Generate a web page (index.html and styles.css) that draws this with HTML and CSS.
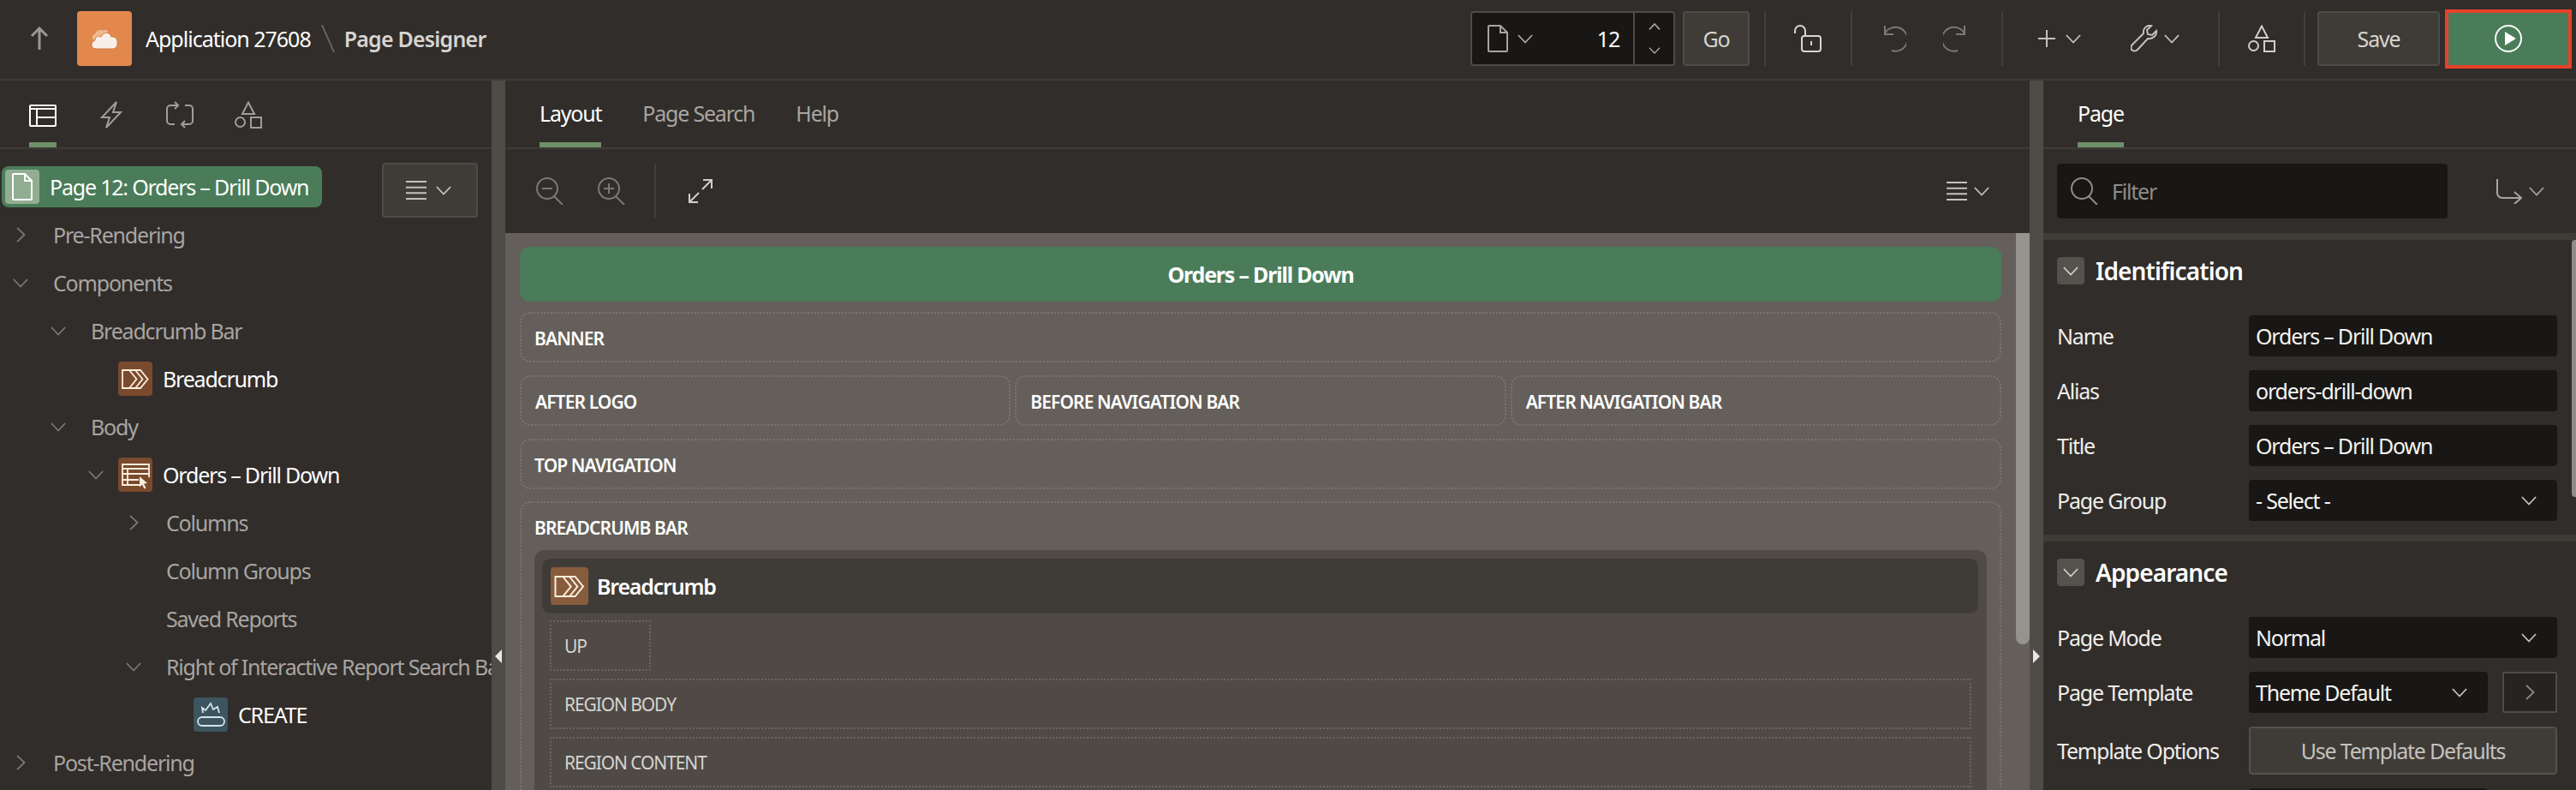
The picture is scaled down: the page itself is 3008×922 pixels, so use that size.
FILE: index.html
```html
<!DOCTYPE html>
<html lang="en">
<head>
  <meta charset="UTF-8" />
  <title>Page Designer</title>
  <link rel="stylesheet" href="styles.css">
</head>
<body>
  <svg class="defs" width="0" height="0">
    <symbol id="chev-d" viewBox="0 0 20 12"><path d="M1 1l9 9.500 9-9.500" fill="none" stroke="currentColor" stroke-width="2"/></symbol>
    <symbol id="chev-r" viewBox="0 0 12 20"><path d="M1 1l9.500 9-9.500 9" fill="none" stroke="currentColor" stroke-width="2"/></symbol>
    <symbol id="shapes" viewBox="0 0 32 32"><g fill="none" stroke="currentColor" stroke-width="2"><path d="M16 1.500l7 13.500H9z"/><circle cx="6.500" cy="24.500" r="5.500"/><rect x="19" y="19" width="12" height="12"/></g></symbol>
    <symbol id="lines" viewBox="0 0 24 22"><path d="M0 1h24M0 7.700h24M0 14.300h24M0 21h24" fill="none" stroke="currentColor" stroke-width="2"/></symbol>
    <symbol id="crumb" viewBox="0 0 40 40"><g fill="none" stroke="currentColor" stroke-width="1.800"><path d="M5 10h21l8.500 10.500L26 31H5z"/><path d="M13 10l8.500 10.500L13 31M20 10l8.500 10.500L20 31"/></g></symbol>
    <symbol id="zoom-o" viewBox="0 0 32 32"><g fill="none" stroke="currentColor" stroke-width="2"><circle cx="13" cy="13" r="12"/><path d="M21 22l10 10M7 13h12"/></g></symbol>
    <symbol id="zoom-i" viewBox="0 0 32 32"><g fill="none" stroke="currentColor" stroke-width="2"><circle cx="13" cy="13" r="12"/><path d="M21 22l10 10M7 13h12M13 7v12"/></g></symbol>
  </svg>

  <header class="topbar">
    <button class="up-btn">
      <svg width="20" height="28" viewBox="0 0 20 28"><path d="M10 27V2M1 11l9-9 9 9" fill="none" stroke="#9b9895" stroke-width="3"/></svg>
    </button>
    <div class="app-logo">
      <svg width="64" height="64" viewBox="0 0 64 64">
        <path d="M19 34c-3-2-2-7 2-8 1-4 6-6 9-4 3-2 6 0 7 3l-6 9z" fill="#f0b88f" stroke="#d9834d" stroke-width="1"/>
        <path d="M22 44c-6 0-7-8-1-10 0-4 4-6 7-4 2-6 11-6 12 0 4-1 8 3 7 8 0 4-3 6-6 6z" fill="#f8efe9" stroke="#cf7c47" stroke-width="1"/>
      </svg>
    </div>
    <a class="crumb-link">Application 27608</a>
    <span class="crumb-sep"></span>
    <strong class="crumb-current">Page Designer</strong>

    <div class="top-tools">
      <div class="page-picker">
        <svg class="ic-page" width="24" height="32" viewBox="0 0 24 32"><path d="M1 2a1 1 0 0 1 1-1h13l8 8v21a1 1 0 0 1-1 1H2a1 1 0 0 1-1-1zM15 1v8h8" fill="none" stroke="#a8a5a1" stroke-width="2"/></svg>
        <svg class="ic-chev" width="18" height="11" style="color:#a8a5a1"><use href="#chev-d"/></svg>
        <span class="page-num">12</span>
        <div class="spin">
          <svg width="14" height="8" viewBox="0 0 20 12" style="color:#a8a5a1"><path d="M1 11l9-9.500 9 9.500" fill="none" stroke="currentColor" stroke-width="2.500"/></svg>
          <svg width="14" height="8" viewBox="0 0 20 12" style="color:#a8a5a1"><use href="#chev-d"/></svg>
        </div>
      </div>
      <button class="btn btn-go">Go</button>
      <i class="vdiv d-a"></i>
      <svg class="ic-lock" width="32" height="32" viewBox="0 0 32 32"><g fill="none" stroke="#d8d6d3" stroke-width="2"><path d="M1 10V7a6 6 0 0 1 12 0v6"/><rect x="9" y="13" width="22" height="18" rx="3"/><path d="M20 19v5"/></g></svg>
      <i class="vdiv d-b"></i>
      <svg class="ic-undo" width="32" height="32" viewBox="0 0 32 32"><path d="M5 10A14 14 0 1 1 13 30 M5 1v10h10" transform="matrix(1 0 0 1 2 0)" fill="none" stroke="#7c7875" stroke-width="2"/></svg>
      <svg class="ic-redo" width="32" height="32" viewBox="0 0 32 32"><path d="M27 10A14 14 0 1 0 19 30 M27 1v10H17" transform="translate(-2 0)" fill="none" stroke="#7c7875" stroke-width="2"/></svg>
      <i class="vdiv d-c"></i>
      <svg class="ic-plus" width="20" height="20" viewBox="0 0 20 20"><path d="M10 0v20M0 10h20" stroke="#c4c2bf" stroke-width="2"/></svg>
      <svg class="ic-chev2" width="18" height="11" style="color:#c4c2bf"><use href="#chev-d"/></svg>
      <svg class="ic-wrench" width="32" height="32" viewBox="0 0 32 32"><path d="M30 7l-5 5-5-1-1-5 5-5c-5-1-10 3-9 9L2 23c-2 2-2 4-1 6 2 2 5 2 7 0l12-13c6 1 11-4 10-9z" fill="none" stroke="#c4c2bf" stroke-width="2"/></svg>
      <svg class="ic-chev3" width="18" height="11" style="color:#c4c2bf"><use href="#chev-d"/></svg>
      <i class="vdiv d-d"></i>
      <svg class="ic-shapes" width="32" height="32" style="color:#d0cecb"><use href="#shapes"/></svg>
      <i class="vdiv d-e"></i>
      <button class="btn btn-save">Save</button>
      <button class="btn-run">
        <svg width="32" height="32" viewBox="0 0 32 32"><circle cx="16" cy="16" r="15" fill="none" stroke="#fff" stroke-width="2"/><path d="M12 8l13 8-13 8z" fill="#fff"/></svg>
      </button>
    </div>
  </header>

  <main class="panes">
    <section class="pane-left">
      <nav class="tabs tabs-icons">
        <a class="icon-tab active">
          <svg width="32" height="32" viewBox="0 0 32 32"><g fill="none" stroke="#fff" stroke-width="2"><rect x="1" y="5" width="30" height="24" rx="1"/><path d="M1 9h30M9 9v20M9 19h22"/></g></svg>
        </a>
        <a class="icon-tab">
          <svg width="32" height="32" viewBox="0 0 32 32"><path d="M22 1L5 19h9l-4 12 17-18h-9z" fill="none" stroke="#a09d9a" stroke-width="2"/></svg>
        </a>
        <a class="icon-tab">
          <svg width="32" height="32" viewBox="0 0 32 32"><g fill="none" stroke="#a09d9a" stroke-width="2"><path d="M14 5H5a4 4 0 0 0-4 4v14a4 4 0 0 0 4 4h5M18 27h9a4 4 0 0 0 4-4V9a4 4 0 0 0-4-4h-5"/><path d="M10 1l4 4-4 4M22 23l-4 4 4 4"/></g></svg>
        </a>
        <a class="icon-tab">
          <svg width="32" height="32" style="color:#a09d9a"><use href="#shapes"/></svg>
        </a>
      </nav>
      <div class="tree">
        <div class="row root-row">
          <div class="page-node">
            <span class="page-node-icon">
              <svg width="24" height="32" viewBox="0 0 24 32"><path d="M1 2a1 1 0 0 1 1-1h13l8 8v21a1 1 0 0 1-1 1H2a1 1 0 0 1-1-1zM15 1v8h8" fill="none" stroke="#fff" stroke-width="2"/></svg>
            </span>
            <span>Page 12: Orders – Drill Down</span>
          </div>
          <button class="btn btn-menu">
            <svg width="24" height="22" style="color:#c4c2bf"><use href="#lines"/></svg>
            <svg width="18" height="11" style="color:#c4c2bf"><use href="#chev-d"/></svg>
          </button>
        </div>
        <div class="row lv0"><span class="tog"><svg width="11" height="18"><use href="#chev-r"/></svg></span>Pre-Rendering</div>
        <div class="row lv0"><span class="tog"><svg width="18" height="11"><use href="#chev-d"/></svg></span>Components</div>
        <div class="row lv1"><span class="tog"><svg width="18" height="11"><use href="#chev-d"/></svg></span>Breadcrumb Bar</div>
        <div class="row lv2 has-icon">
          <span class="tog"></span>
          <span class="node-icon brown"><svg width="40" height="40"><use href="#crumb"/></svg></span>Breadcrumb
        </div>
        <div class="row lv1"><span class="tog"><svg width="18" height="11"><use href="#chev-d"/></svg></span>Body</div>
        <div class="row lv2 has-icon">
          <span class="tog"><svg width="18" height="11"><use href="#chev-d"/></svg></span>
          <span class="node-icon brown">
            <svg width="40" height="40" viewBox="0 0 40 40"><g fill="none" stroke="currentColor" stroke-width="1.800"><path d="M27 32H5V8h31v15"/><path d="M5 13h31M5 19h31M5 26h19M11 13v19"/></g><path d="M25 22l9 8-4 .5 2.500 5-2 1-2.500-5-3 3z" fill="currentColor"/></svg>
          </span>Orders – Drill Down
        </div>
        <div class="row lv3"><span class="tog"><svg width="11" height="18"><use href="#chev-r"/></svg></span>Columns</div>
        <div class="row lv3"><span class="tog"></span>Column Groups</div>
        <div class="row lv3"><span class="tog"></span>Saved Reports</div>
        <div class="row lv3"><span class="tog"><svg width="18" height="11"><use href="#chev-d"/></svg></span>Right of Interactive Report Search Bar</div>
        <div class="row lv4 has-icon">
          <span class="tog"></span>
          <span class="node-icon slate">
            <svg width="40" height="40" viewBox="0 0 40 40"><g fill="none" stroke="currentColor" stroke-width="1.800"><rect x="5" y="23" width="31" height="10" rx="5"/><path d="M11 18l-1-6 4 3 6-8 3 7 5-3 2 7"/></g></svg>
          </span>CREATE
        </div>
        <div class="row lv0"><span class="tog"><svg width="11" height="18"><use href="#chev-r"/></svg></span>Post-Rendering</div>
      </div>
    </section>

    <div class="splitter"><i class="tri tri-l"></i></div>

    <section class="pane-center">
      <nav class="tabs text-tabs">
        <a class="text-tab active">Layout</a>
        <a class="text-tab">Page Search</a>
        <a class="text-tab">Help</a>
      </nav>
      <div class="canvas-tools">
        <svg class="ic-zo" width="32" height="32" style="color:#7c7875"><use href="#zoom-o"/></svg>
        <svg class="ic-zi" width="32" height="32" style="color:#7c7875"><use href="#zoom-i"/></svg>
        <i class="vdiv d-f"></i>
        <svg class="ic-exp" width="28" height="28" viewBox="0 0 28 28"><g fill="none" stroke="#d0cecb" stroke-width="2"><path d="M16 12L27 1M17 1h10v10M12 16L1 27M1 17v10h10"/></g></svg>
        <span class="canvas-menu">
          <svg width="24" height="22" style="color:#c4c2bf"><use href="#lines"/></svg>
          <svg width="18" height="11" style="color:#c4c2bf"><use href="#chev-d"/></svg>
        </span>
      </div>
      <div class="canvas">
        <div class="page-title">Orders – Drill Down</div>
        <div class="slot slot-banner"><b>Banner</b></div>
        <div class="slot-row">
          <div class="slot"><b>After Logo</b></div>
          <div class="slot"><b>Before Navigation Bar</b></div>
          <div class="slot"><b>After Navigation Bar</b></div>
        </div>
        <div class="slot slot-nav"><b>Top Navigation</b></div>
        <div class="slot slot-bar">
          <b>Breadcrumb Bar</b>
          <div class="region">
            <div class="region-head">
              <span class="head-icon"><svg width="44" height="44" viewBox="0 0 40 40"><use href="#crumb" width="40" height="40"/></svg></span>
              Breadcrumb
            </div>
            <div class="sub-slot sub-up">Up</div>
            <div class="sub-slot">Region Body</div>
            <div class="sub-slot">Region Content</div>
          </div>
        </div>
        <div class="canvas-scroll"></div>
      </div>
    </section>

    <div class="splitter"><i class="tri tri-r"></i></div>

    <section class="pane-right">
      <nav class="tabs text-tabs right-tabs">
        <a class="text-tab active">Page</a>
      </nav>
      <div class="filter-row">
        <div class="filter">
          <svg width="32" height="32" viewBox="0 0 32 32"><g fill="none" stroke="#8f8c88" stroke-width="2"><circle cx="13" cy="13" r="12"/><path d="M21 22l10 10"/></g></svg>
          <span>Filter</span>
        </div>
        <svg class="ic-go" width="30" height="30" viewBox="0 0 30 30"><path d="M1 1v16a6 6 0 0 0 6 6h21M21 16l8 7-8 7" fill="none" stroke="#a8a5a1" stroke-width="2"/></svg>
        <svg class="ic-chev4" width="18" height="11" style="color:#a8a5a1"><use href="#chev-d"/></svg>
      </div>
      <div class="props">
        <div class="prop-scroll"></div>
        <div class="group">
          <h2><span class="group-tog"><svg width="18" height="11"><use href="#chev-d"/></svg></span>Identification</h2>
          <div class="field"><label>Name</label><span class="val">Orders – Drill Down</span></div>
          <div class="field"><label>Alias</label><span class="val">orders-drill-down</span></div>
          <div class="field"><label>Title</label><span class="val">Orders – Drill Down</span></div>
          <div class="field"><label>Page Group</label><span class="val sel">- Select -<svg width="18" height="11"><use href="#chev-d"/></svg></span></div>
        </div>
        <div class="group">
          <h2><span class="group-tog"><svg width="18" height="11"><use href="#chev-d"/></svg></span>Appearance</h2>
          <div class="field"><label>Page Mode</label><span class="val sel">Normal<svg width="18" height="11"><use href="#chev-d"/></svg></span></div>
          <div class="field">
            <label>Page Template</label>
            <span class="val sel short">Theme Default<svg width="18" height="11"><use href="#chev-d"/></svg></span>
            <span class="go-btn"><svg width="11" height="18"><use href="#chev-r"/></svg></span>
          </div>
          <div class="field"><label>Template Options</label><span class="use-defaults">Use Template Defaults</span></div>
          <div class="field"><label></label><span class="val short"></span></div>
        </div>
      </div>
    </section>
  </main>
</body>
</html>
```

FILE: styles.css
```css
* {
  box-sizing: border-box;
}
html, body {
  margin: 0;
  height: 922px;
  overflow: hidden;
}
body {
  width: 3008px;
  background: #312d2a;
  color: #fff;
  font-family: "Noto Sans", sans-serif;
  font-size: 25px;
  letter-spacing: -1.2px;
}
.defs {
  position: absolute;
}
button {
  font: inherit;
  letter-spacing: inherit;
  color: inherit;
}
svg {
  display: block;
  flex: none;
}

/* top bar */
.topbar {
  display: flex;
  align-items: center;
  height: 94px;
  padding-bottom: 2px;
  border-bottom: 2px solid #3f3b37;
}
.up-btn {
  width: 46px;
  margin: 0 8px 0 36px;
  padding: 0;
  background: none;
  border: none;
}
.app-logo {
  width: 64px;
  height: 64px;
  margin-right: 16px;
  background: #e2884d;
  border-radius: 4px;
}
.crumb-link {
  letter-spacing: -1px;
}
.crumb-sep {
  width: 2px;
  height: 32px;
  margin: 0 18px 0 19px;
  background: #6b6763;
  transform: skewX(24deg);
}
.crumb-current {
  font-weight: 600;
  letter-spacing: -0.8px;
  color: #d6d4d1;
}
.top-tools {
  display: flex;
  align-items: center;
  margin-left: auto;
  padding-right: 5px;
  height: 76px;
}
.page-picker {
  display: flex;
  align-items: center;
  width: 239px;
  height: 64px;
  background: #181715;
  border: 2px solid #4f4b47;
  border-radius: 4px;
}
.ic-page {
  margin-left: 18px;
}
.ic-chev {
  margin-left: 11px;
}
.page-num {
  margin-left: auto;
  padding-right: 16px;
}
.spin {
  display: flex;
  flex-direction: column;
  justify-content: space-between;
  align-items: center;
  width: 47px;
  height: 100%;
  padding: 12px 0;
  border-left: 2px solid #4f4b47;
}
.btn {
  display: flex;
  align-items: center;
  justify-content: center;
  background: #3f3c37;
  border: 2px solid #4f4b47;
  border-radius: 4px;
  color: #d6d4d1;
}
.btn-go {
  width: 78px;
  height: 64px;
  margin-left: 9px;
}
.vdiv {
  display: block;
  width: 2px;
  height: 64px;
  background: #423e3a;
}
.d-a { margin-left: 17px; }
.ic-lock { margin-left: 33px; }
.d-b { margin-left: 34px; }
.ic-undo { margin-left: 31px; }
.ic-redo { margin-left: 43px; }
.d-c { margin-left: 36px; }
.ic-plus { margin-left: 41px; }
.ic-chev2 { margin-left: 12px; }
.ic-wrench { margin-left: 58px; }
.ic-chev3 { margin-left: 7px; }
.d-d { margin-left: 45px; }
.ic-shapes { margin-left: 33px; }
.d-e { margin-left: 33px; }
.btn-save {
  width: 143px;
  height: 64px;
  margin-left: 14px;
}
.btn-run {
  display: flex;
  align-items: center;
  justify-content: center;
  width: 148px;
  height: 69px;
  margin-left: 6px;
  background: #4a7c59;
  border: 4px solid #e8412a;
  padding: 0;
}

/* panes */
.panes {
  display: flex;
  height: 828px;
}
.pane-left {
  width: 574px;
  overflow: hidden;
  white-space: nowrap;
}
.splitter {
  width: 16px;
  padding-top: 664px;
  background: #4f4b47;
}
.tri {
  display: block;
  width: 0;
  height: 0;
  border-top: 8px solid transparent;
  border-bottom: 8px solid transparent;
}
.tri-l {
  margin-left: 4px;
  border-right: 8px solid #e8e6e3;
}
.tri-r {
  margin-left: 4px;
  border-left: 8px solid #e8e6e3;
}
.pane-center {
  width: 1780px;
}
.pane-right {
  flex: 1;
  min-width: 0;
}

/* tabs */
.tabs {
  display: flex;
  height: 80px;
  border-bottom: 2px solid #3f3b37;
}
.tabs-icons {
  gap: 48px;
  padding-left: 34px;
}
.icon-tab {
  width: 32px;
  padding-top: 24px;
  border-bottom: 6px solid transparent;
}
.icon-tab.active, .text-tab.active {
  border-bottom-color: #6e9068;
}
.text-tabs {
  gap: 48px;
  padding-left: 40px;
}
.text-tab {
  height: 78px;
  line-height: 77px;
  border-bottom: 6px solid transparent;
  color: #a8a5a1;
}
.text-tab.active {
  color: #fff;
}

/* tree */
.tree {
  padding-top: 16px;
  color: #a8a5a1;
}
.row {
  display: flex;
  align-items: center;
  height: 56px;
}
.root-row {
  align-items: flex-start;
  padding-left: 2px;
  padding-right: 16px;
}
.page-node {
  display: flex;
  align-items: center;
  width: 374px;
  height: 48px;
  margin-top: 4px;
  padding-left: 4px;
  background: #4a7c59;
  border-radius: 8px;
  color: #fff;
}
.page-node-icon {
  display: flex;
  align-items: center;
  justify-content: center;
  flex: none;
  width: 40px;
  height: 40px;
  margin-right: 12px;
  background: #92ae92;
  border-radius: 4px;
}
.btn-menu {
  gap: 11px;
  width: 112px;
  height: 64px;
  margin-left: auto;
  padding: 0 3px 0 0;
}
.tog {
  display: flex;
  align-items: center;
  justify-content: center;
  flex: none;
  width: 24px;
  margin-right: 26px;
  color: #7c7875;
}
.has-icon {
  color: #fff;
}
.has-icon .tog {
  margin-right: 14px;
}
.lv0 { padding-left: 12px; }
.lv1 { padding-left: 56px; }
.lv2 { padding-left: 100px; }
.lv3 { padding-left: 144px; }
.lv4 { padding-left: 188px; }
.node-icon {
  flex: none;
  width: 40px;
  height: 40px;
  margin-right: 12px;
  border-radius: 4px;
  color: #fbeedd;
}
.brown {
  background: #7a4a2e;
}
.slate {
  background: #3d5560;
  color: #d4e6ea;
}

/* canvas */
.canvas-tools {
  display: flex;
  align-items: center;
  height: 98px;
  padding-left: 36px;
}
.ic-zi { margin-left: 40px; }
.d-f { margin-left: 34px; }
.ic-exp { margin-left: 38px; }
.canvas-menu {
  display: flex;
  align-items: center;
  gap: 8px;
  margin-left: auto;
  margin-right: 47px;
}
.canvas {
  position: relative;
  height: 650px;
  padding: 16px 33px 0 17px;
  overflow: hidden;
  background: #645f5a;
}
.page-title {
  height: 64px;
  margin-bottom: 12px;
  line-height: 64px;
  text-align: center;
  font-weight: 700;
  background: #4a7c59;
  border-radius: 12px;
}
.slot {
  flex: 1;
  height: 59px;
  padding: 0 15px;
  border: 2px dotted #7a7570;
  border-radius: 12px;
}
.slot b {
  display: block;
  line-height: 58px;
  font-size: 21px;
  font-weight: 600;
  letter-spacing: -0.9px;
  text-transform: uppercase;
}
.slot-banner {
  margin-bottom: 15px;
}
.slot-row {
  display: flex;
  gap: 5px;
  margin-bottom: 15px;
}
.slot-row .slot {
  padding-left: 16px;
}
.slot-nav {
  margin-bottom: 14px;
}
.slot-bar {
  height: auto;
  padding-bottom: 20px;
}
.region {
  margin-top: -3px;
  padding: 10px 10px 10px 9px;
  background: #4f4a46;
  border-radius: 12px;
}
.region-head {
  display: flex;
  align-items: center;
  height: 64px;
  margin-bottom: 8px;
  padding-left: 10px;
  font-weight: 600;
  background: #3f3c37;
  border-radius: 10px;
}
.head-icon {
  width: 44px;
  height: 44px;
  margin-right: 10px;
  background: #875c3d;
  border-radius: 4px;
  color: #fbeedd;
}
.sub-slot {
  height: 59px;
  margin: 0 8px 9px 9px;
  padding-left: 15px;
  line-height: 57px;
  font-size: 21px;
  letter-spacing: -1.1px;
  text-transform: uppercase;
  border: 2px dotted #6a6662;
  border-radius: 2px;
  color: #d6d4d1;
}
.sub-up {
  width: 118px;
}
.canvas-scroll {
  position: absolute;
  top: 0;
  right: 0;
  width: 16px;
  height: 480px;
  background: #96928e;
  border-radius: 0 0 8px 8px;
}

/* property editor */
.filter-row {
  display: flex;
  align-items: center;
  height: 98px;
  padding-left: 16px;
}
.filter {
  display: flex;
  align-items: center;
  width: 456px;
  height: 64px;
  padding-left: 16px;
  background: #181715;
  border-radius: 4px;
  color: #8f8c88;
}
.filter span {
  margin-left: 16px;
}
.ic-go { margin-left: 57px; }
.ic-chev4 { margin-left: 8px; }
.props {
  position: relative;
  height: 650px;
  overflow: hidden;
}
.prop-scroll {
  position: absolute;
  top: 8px;
  right: 0;
  width: 5px;
  height: 300px;
  background: #8f8c88;
  border-radius: 4px 0 0 4px;
}
.group {
  padding: 20px 22px 16px 16px;
  border-top: 8px solid #3f3c37;
}
.group h2 {
  display: flex;
  align-items: center;
  height: 32px;
  margin: 0 0 36px;
  font-size: 28px;
  font-weight: 600;
  letter-spacing: -0.9px;
}
.group-tog {
  display: flex;
  align-items: center;
  justify-content: center;
  width: 32px;
  height: 32px;
  margin-right: 13px;
  background: #55514d;
  border-radius: 4px;
  color: #d0cecb;
}
.field {
  display: flex;
  align-items: center;
  min-height: 48px;
  margin-bottom: 16px;
}
.field:last-child {
  margin-bottom: 0;
}
.field label {
  width: 224px;
  flex: none;
  color: #f0eeec;
}
.val {
  display: flex;
  align-items: center;
  justify-content: space-between;
  flex: 1;
  height: 48px;
  padding: 0 24px 0 8px;
  background: #181715;
  border-radius: 4px;
  color: #f5f4f2;
}
.val svg {
  color: #c4c2bf;
}
.short {
  flex: none;
  width: 279px;
}
.go-btn {
  display: flex;
  align-items: center;
  justify-content: center;
  width: 64px;
  height: 48px;
  margin-left: 17px;
  background: #262422;
  border: 2px solid #4f4b47;
  border-radius: 2px;
  color: #8f8c88;
}
.use-defaults {
  flex: 1;
  height: 56px;
  line-height: 52px;
  text-align: center;
  background: #3f3c37;
  border: 2px solid #55514d;
  border-radius: 4px;
  color: #c4c2bf;
}
```
